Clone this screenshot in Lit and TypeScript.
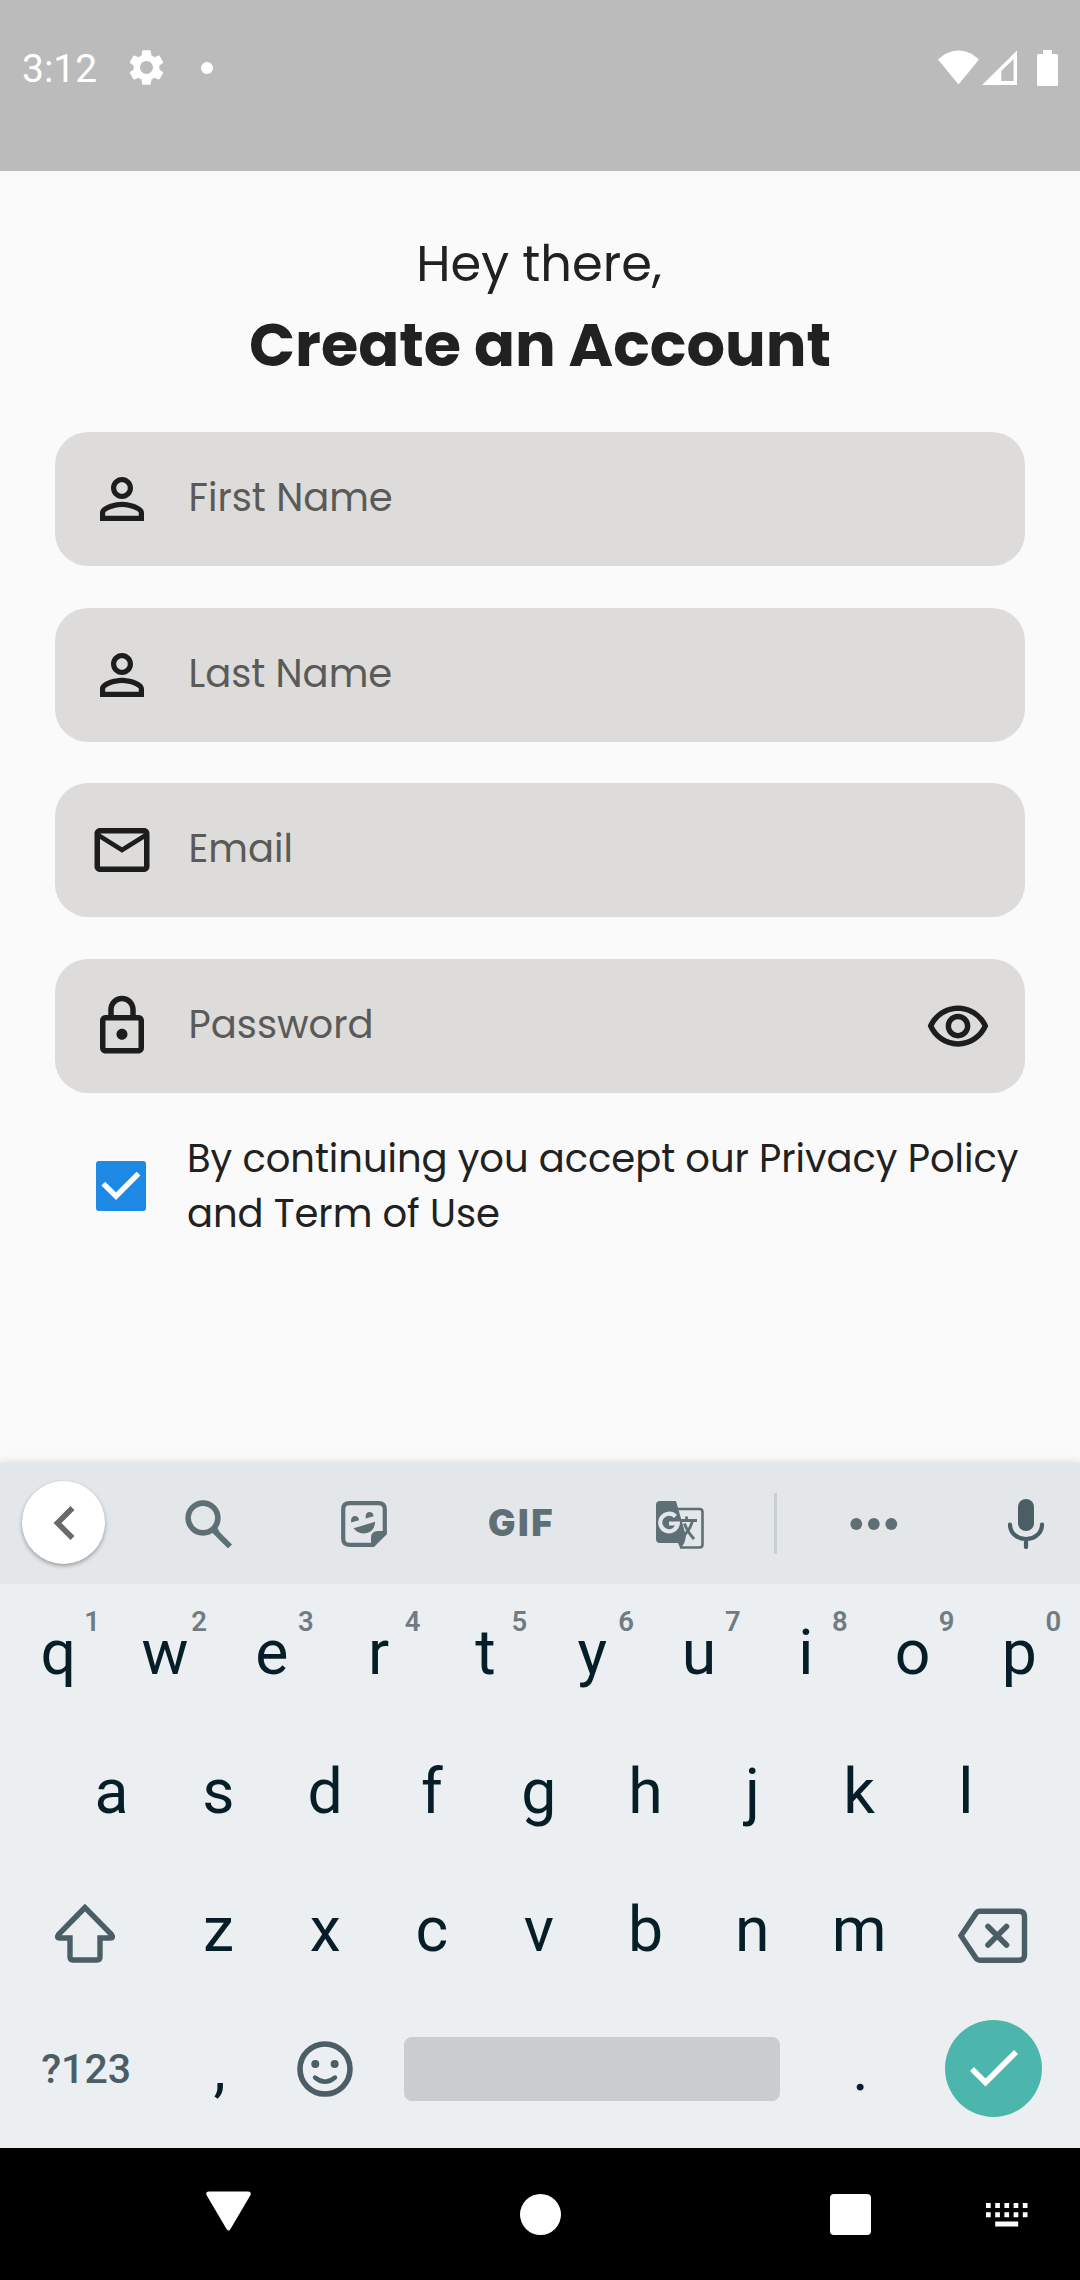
import { LitElement, html, css, svg } from "lit";
import { customElement, property } from "lit/decorators.js";

const ICONS: Record<string, { box: string; body: unknown }> = {
  person: {
    box: "0 0 24 24",
    body: svg`<path d="M12 5.9c1.16 0 2.1.94 2.1 2.1s-.94 2.1-2.1 2.1S9.9 9.16 9.9 8s.94-2.1 2.1-2.1m0 9c2.97 0 6.1 1.46 6.1 2.1v1.1H5.9V17c0-.64 3.13-2.1 6.1-2.1M12 4C9.79 4 8 5.79 8 8s1.79 4 4 4 4-1.79 4-4-1.79-4-4-4zm0 9c-2.67 0-8 1.34-8 4v3h16v-3c0-2.66-5.33-4-8-4z"/>`,
  },
  mail: {
    box: "0 0 24 24",
    body: svg`<path d="M22 6c0-1.1-.9-2-2-2H4c-1.1 0-2 .9-2 2v12c0 1.1.9 2 2 2h16c1.1 0 2-.9 2-2V6zm-2 0l-8 5-8-5h16zm0 12H4V8l8 5 8-5v10z"/>`,
  },
  lock: {
    box: "0 0 24 24",
    body: svg`<path d="M18 8h-1V6c0-2.76-2.24-5-5-5S7 3.24 7 6v2H6c-1.1 0-2 .9-2 2v10c0 1.1.9 2 2 2h12c1.1 0 2-.9 2-2V10c0-1.1-.9-2-2-2zM9 6c0-1.66 1.34-3 3-3s3 1.34 3 3v2H9V6zm9 14H6V10h12v10zm-6-3c1.1 0 2-.9 2-2s-.9-2-2-2-2 .9-2 2 .9 2 2 2z"/>`,
  },
  eye: {
    box: "0 -0.5 24 24",
    body: svg`<path d="M12 6c3.79 0 7.17 2.13 8.82 5.5C19.17 14.87 15.79 17 12 17s-7.17-2.13-8.82-5.5C4.83 8.13 8.21 6 12 6m0-2C7 4 2.73 7.11 1 11.5 2.73 15.89 7 19 12 19s9.27-3.11 11-7.5C21.27 7.11 17 4 12 4zm0 5c1.38 0 2.5 1.12 2.5 2.5S13.38 14 12 14s-2.5-1.12-2.5-2.5S10.62 9 12 9m0-2c-2.48 0-4.5 2.02-4.5 4.5S9.52 16 12 16s4.5-2.02 4.5-4.5S14.48 7 12 7z"/>`,
  },
  gear: {
    box: "0 0 24 24",
    body: svg`<path d="M19.14 12.94c.04-.3.06-.61.06-.94 0-.32-.02-.64-.07-.94l2.03-1.58c.18-.14.23-.41.12-.61l-1.92-3.32c-.12-.22-.37-.29-.59-.22l-2.39.96c-.5-.38-1.03-.7-1.62-.94l-.36-2.54c-.04-.24-.24-.41-.48-.41h-3.84c-.24 0-.43.17-.47.41l-.36 2.54c-.59.24-1.13.57-1.62.94l-2.39-.96c-.22-.08-.47 0-.59.22L2.74 8.87c-.12.21-.08.47.12.61l2.03 1.58c-.05.3-.09.63-.09.94s.02.64.07.94l-2.03 1.58c-.18.14-.23.41-.12.61l1.92 3.32c.12.22.37.29.59.22l2.39-.96c.5.38 1.03.7 1.62.94l.36 2.54c.05.24.24.41.48.41h3.84c.24 0 .44-.17.47-.41l.36-2.54c.59-.24 1.13-.56 1.62-.94l2.39.96c.22.08.47 0 .59-.22l1.92-3.32c.12-.22.07-.47-.12-.61l-2.01-1.58zM12 15.6c-1.98 0-3.6-1.62-3.6-3.6s1.62-3.6 3.6-3.6 3.6 1.62 3.6 3.6-1.62 3.6-3.6 3.6z"/>`,
  },
  wifi: { box: "0 0 41 35", body: svg`<path d="M20.5 34.5 0 9.6C5.500 4 12.600 .4 20.500 .4S35.500 4 41 9.600z"/>` },
  signal: {
    box: "0 0 35 35",
    body: svg`<path fill-rule="evenodd" d="M35 .5V35H0zM19.300 21V31H31.600V9z"/>`,
  },
  battery: {
    box: "0 0 21 36",
    body: svg`<path d="M6 0h9v4h4.500q1.500 0 1.500 1.500v29q0 1.500-1.500 1.500h-18Q0 36 0 34.500v-29Q0 4 1.500 4H6z"/>`,
  },
  check: {
    box: "0 0 50 50",
    body: svg`<path d="M7.300 22.600 20 35.200 42.500 12.700" fill="none" stroke="currentColor" stroke-width="5.400"/>`,
  },
  chevron: {
    box: "0 0 22 34",
    body: svg`<path d="M19.500 2 4.500 17l15 15" fill="none" stroke="currentColor" stroke-width="5.600"/>`,
  },
  search: {
    box: "0 0 48 48",
    body: svg`<circle cx="18" cy="18" r="14.900" fill="none" stroke="currentColor" stroke-width="5.600"/><path d="M29 30.500 45 46.500" stroke="currentColor" stroke-width="5.600"/><path d="M26 31.500 31.500 26 34.500 32 30.500 35z"/>`,
  },
  sticker: {
    box: "0 0 46 46",
    body: svg`<path d="M8.500 2.200H37.500Q43.800 2.200 43.800 8.500V32L31.500 43.800H8.500Q2.200 43.800 2.200 37.500V8.500Q2.200 2.200 8.500 2.200z" fill="none" stroke="currentColor" stroke-width="4.200"/><path d="M30 45V37Q30 30 37 30H45.800V33L33 46z"/><path d="M10.200 21.600C9.400 17.500 11.200 14.900 13.900 14.900S18.200 17 17.900 19.300zM24.800 17.600C24 13.500 25.800 10.900 28.500 10.900S32.800 13 32.500 15.300zM12.500 27.300 34.200 20.800Q33.500 32.200 22.500 32.400 16 32.200 12.500 27.300z"/>`,
  },
  translate: {
    box: "0 0 48 48",
    body: svg`<path d="M4 0H20L30 35l-1.500 6.500-4 6.500-2.500-6H4Q0 42 0 38V4Q0 0 4 0z"/><path d="M22 8H43.500Q46.500 8 46.500 11V43.500Q46.500 46.500 43.500 46.500H24.500" fill="none" stroke="currentColor" stroke-width="2.600"/><path d="M25 19.500H41M30.500 15.500V19.500M36.500 19.500C35 26 32 31 26.500 36M28.500 22.500C30.500 29 33.500 33 38 38" fill="none" stroke="currentColor" stroke-width="2.800"/><path d="M19.500 15.500A8.800 8.800 0 1 0 21.800 22.500H13" fill="none" stroke="#e3e7ea" stroke-width="4.200"/>`,
  },
  more: {
    box: "0 0 48 12",
    body: svg`<circle cx="6.300" cy="6" r="5.900"/><circle cx="23.800" cy="6" r="5.900"/><circle cx="41.300" cy="6" r="5.900"/>`,
  },
  mic: {
    box: "0 0 36 50",
    body: svg`<rect x="10" y="0" width="16" height="32" rx="8"/><path d="M2 25.500C2 34 9 40 18 40S34 34 34 25.500M18 40V48" fill="none" stroke="currentColor" stroke-width="4.200" stroke-linecap="round"/>`,
  },
  shift: {
    box: "0 0 62 60",
    body: svg`<path d="M31 4.500 4.500 31.500Q2 35 6 35H16V54Q16 57 19 57H43Q46 57 46 54V35H56Q60 35 57.500 31.500z" fill="none" stroke="currentColor" stroke-width="5.400"/>`,
  },
  backspace: {
    box: "0 0 70 56",
    body: svg`<path d="M22 3.200H61Q66.500 3.200 66.500 8.500V47Q66.500 52.200 61 52.200H22Q19 52.200 17.500 49.500L3 27.700 17.500 6Q19 3.200 22 3.200z" fill="none" stroke="currentColor" stroke-width="5.400"/><path d="M30 18.500 48.500 37M48.500 18.500 30 37" stroke="currentColor" stroke-width="5.600" stroke-linecap="round"/>`,
  },
  smile: {
    box: "0 0 56 56",
    body: svg`<circle cx="28" cy="28" r="25" fill="none" stroke="currentColor" stroke-width="5.600"/><circle cx="18.300" cy="23" r="4"/><circle cx="37.600" cy="23" r="4"/><path d="M18 36.500Q28 45 38 36.500" fill="none" stroke="currentColor" stroke-width="4.400" stroke-linecap="round"/>`,
  },
  done: {
    box: "0 0 50 38",
    body: svg`<path d="M3 20 16.500 33.500 47 3" fill="none" stroke="currentColor" stroke-width="5.600"/>`,
  },
  back: { box: "0 0 45 40", body: svg`<path d="M3 .5H42Q45.500 .5 44.500 4L24.500 38Q22.500 41 20.500 38L.5 4Q-.5 .5 3 .5z"/>` },
  dock: {
    box: "0 0 42 24",
    body: svg`<path d="M0 0h4.700v5H0zM9.200 0h4.700v5H9.200zM18.400 0h4.700v5h-4.700zM27.600 0h4.700v5h-4.700zM36.800 0h4.700v5h-4.700zM0 9.200h4.700v5H0zM9.200 9.200h4.700v5H9.200zM18.400 9.200h4.700v5h-4.700zM27.600 9.200h4.700v5h-4.700zM36.800 9.200h4.700v5h-4.700zM9.200 18.400h23v5h-23z"/>`,
  },
};

const icon = (name: string) =>
  html`<svg class="icon i-${name}" viewBox=${ICONS[name].box} fill="currentColor" aria-hidden="true">${ICONS[name].body}</svg>`;

@customElement("status-bar")
class StatusBar extends LitElement {
  static styles = css`
    :host { display: block; height: 171px; background: #bbb; color: #fff; }
    .row { display: flex; align-items: center; height: 135px; padding: 0 22px; }
    .icon { display: block; flex: none; }
    .time { width: 103px; font: 400 39px/46px Roboto, sans-serif; padding-top: 3px; }
    .i-gear { width: 43px; height: 43px; }
    .dot { width: 12px; height: 12px; border-radius: 50%; background: #fff; margin-left: 33px; }
    .right { display: flex; align-items: center; margin-left: auto; }
    .i-wifi { width: 41px; height: 35px; }
    .i-signal { width: 35px; height: 35px; margin: 0 20px 0 3px; }
    .i-battery { width: 21px; height: 36px; }
  `;
  render() {
    return html`<div class="row">
      <span class="time">3:12</span>${icon("gear")}<span class="dot"></span>
      <div class="right">${icon("wifi")}${icon("signal")}${icon("battery")}</div>
    </div>`;
  }
}

@customElement("form-field")
class FormField extends LitElement {
  @property() label = "";
  @property() icon = "";
  @property() action = "";
  static styles = css`
    :host {
      display: flex; align-items: center; box-sizing: border-box; height: 134px;
      padding: 0 34px 0 33.5px; border-radius: 33px; background: #dddcda; color: #1d1d1d;
    }
    .icon { display: block; flex: none; width: 66px; height: 66px; }
    .label {
      flex: 1; margin-left: 34px; padding-bottom: 3px; color: #5a5a59;
      font: 400 38.5px/55px Poppins, sans-serif;
    }
  `;
  render() {
    return html`${icon(this.icon)}<span class="label">${this.label}</span>${this.action ? icon(this.action) : ""}`;
  }
}

@customElement("signup-form")
class SignupForm extends LitElement {
  static styles = css`
    :host { display: block; height: 1292px; box-sizing: border-box; padding: 53px 55px 0; color: #212121; font-family: Poppins, sans-serif; }
    .hello { font-size: 49.5px; line-height: 80px; text-align: center; padding-right: 2px; }
    .title { margin: 0.6px 0 47.4px; font-size: 60.5px; font-weight: 700; line-height: 80px; text-align: center; white-space: nowrap; }
    .fields { display: grid; gap: 41.6px; }
    .terms { display: flex; align-items: center; margin-top: 38.4px; padding-left: 41px; }
    .box { flex: none; width: 50px; height: 50px; border-radius: 3px; background: #1e88e5; color: #fff; }
    .icon { display: block; }
    .text { margin-left: 41px; font-size: 38.5px; line-height: 55px; letter-spacing: -0.05px; white-space: nowrap; }
    .line { display: block; }
  `;
  render() {
    return html`
      <div class="hello">Hey there,</div>
      <div class="title">Create an Account</div>
      <div class="fields">
        <form-field icon="person" label="First Name"></form-field>
        <form-field icon="person" label="Last Name"></form-field>
        <form-field icon="mail" label="Email"></form-field>
        <form-field icon="lock" label="Password" action="eye"></form-field>
      </div>
      <div class="terms">
        <div class="box">${icon("check")}</div>
        <div class="text"><span class="line">By continuing you accept our Privacy Policy</span><span class="line">and Term of Use</span></div>
      </div>
    `;
  }
}

@customElement("soft-keyboard")
class SoftKeyboard extends LitElement {
  static styles = css`
    :host {
      display: block; height: 685px; background: #ebeff2; color: #4b5d65; position: relative;
      box-shadow: 0 -1px 8px rgba(0, 0, 0, 0.13); font-family: Roboto, sans-serif;
    }
    .icon { display: block; }
    .tools {
      display: grid; grid-template-columns: 127px 163px 148px 164px 156px 35px 161px 18px 108px;
      place-items: center; height: 121px; background: #e3e7ea; color: #5f6f76;
    }
    .collapse {
      display: grid; place-items: center; width: 83px; height: 83px; margin-bottom: 2px;
      border-radius: 50%; background: #fff; color: #6b6868; box-shadow: 0 2px 4px rgba(0, 0, 0, 0.32);
    }
    .i-chevron { width: 22px; height: 34px; }
    .i-search { width: 48px; height: 48px; margin-top: 1px; }
    .i-sticker { width: 46px; height: 46px; }
    .gif { font: 900 36.5px/44px Inter, sans-serif; letter-spacing: 2.5px; padding: 0 0 2px 3px; }
    .i-translate { width: 48px; height: 48px; margin-top: 3px; }
    .rule { width: 3px; height: 61px; background: #cacfd2; }
    .i-more { width: 48px; height: 12px; }
    .i-mic { width: 36px; height: 50px; grid-column: 9; color: #4b5d65; }
    .keys { display: flex; height: 138.6px; padding: 0 7.2px 0 4.8px; }
    .keys.inset { padding-left: 58.2px; }
    .keys.bottom { padding: 0 6px; }
    .key {
      position: relative; display: grid; place-items: center; width: 106.8px;
      color: #051e28; font-size: 62.5px; line-height: 72px;
    }
    .hint {
      position: absolute; top: 21px; left: calc(50% + 24px); width: 20px; text-align: center;
      font-size: 27.5px; line-height: 33px; font-weight: 600; color: #6f7c82;
    }
    .wide { display: grid; place-items: center; width: 160.2px; }
    .i-shift { width: 62px; height: 60px; margin-top: 5px; }
    .i-backspace { width: 70px; height: 56px; margin-top: 11px; }
    .mode { font-size: 41px; line-height: 48px; font-weight: 500; }
    .emoji { color: #4b5d65; }
    .i-smile { width: 56px; height: 56px; margin-right: 3px; }
    .space { width: 427.2px; display: grid; align-items: center; padding: 0 27px 0 24px; box-sizing: border-box; }
    .bar { height: 64px; border-radius: 8px; background: #c9cdd0; }
    .enter { display: grid; place-items: center; width: 97px; height: 97px; margin-bottom: 2px; border-radius: 50%; background: #4db6ac; color: #fff; }
    .i-done { width: 50px; height: 38px; }
  `;
  private key(ch: string, hint = "") {
    return html`<div class="key">${ch}${hint ? html`<span class="hint">${hint}</span>` : ""}</div>`;
  }
  render() {
    const digits = "1234567890";
    return html`
      <div class="tools">
        <div class="collapse">${icon("chevron")}</div>
        ${icon("search")}${icon("sticker")}
        <span class="gif">GIF</span>
        ${icon("translate")}<span class="rule"></span>${icon("more")}${icon("mic")}
      </div>
      <div class="keys">${[..."qwertyuiop"].map((c, i) => this.key(c, digits[i]))}</div>
      <div class="keys inset">${[..."asdfghjkl"].map((c) => this.key(c))}</div>
      <div class="keys">
        <div class="wide">${icon("shift")}</div>
        ${[..."zxcvbnm"].map((c) => this.key(c))}
        <div class="wide">${icon("backspace")}</div>
      </div>
      <div class="keys bottom">
        <div class="wide mode">?123</div>
        ${this.key(",")}
        <div class="key emoji">${icon("smile")}</div>
        <div class="space"><div class="bar"></div></div>
        ${this.key(".")}
        <div class="wide"><div class="enter">${icon("done")}</div></div>
      </div>
    `;
  }
}

@customElement("nav-bar")
class NavBar extends LitElement {
  static styles = css`
    :host { display: flex; align-items: center; box-sizing: border-box; height: 132px; padding-left: 206px; background: #000; color: #fff; }
    .icon { display: block; }
    .i-back { width: 45px; height: 40px; margin-bottom: 7px; }
    .home { width: 41px; height: 41px; margin-left: 268.5px; border-radius: 50%; background: #fff; }
    .recent { width: 41px; height: 41px; margin-left: 269.5px; border-radius: 4px; background: #fff; margin-top: 1px; }
    .i-dock { width: 42px; height: 24px; margin-left: 115px; margin-top: 1px; }
  `;
  render() {
    return html`${icon("back")}<span class="home"></span><span class="recent"></span>${icon("dock")}`;
  }
}

@customElement("app-root")
class AppRoot extends LitElement {
  static styles = css`
    :host { display: block; width: 1080px; height: 2280px; overflow: hidden; background: #fafafa; }
  `;
  render() {
    return html`<status-bar></status-bar><signup-form></signup-form><soft-keyboard></soft-keyboard><nav-bar></nav-bar>`;
  }
}
